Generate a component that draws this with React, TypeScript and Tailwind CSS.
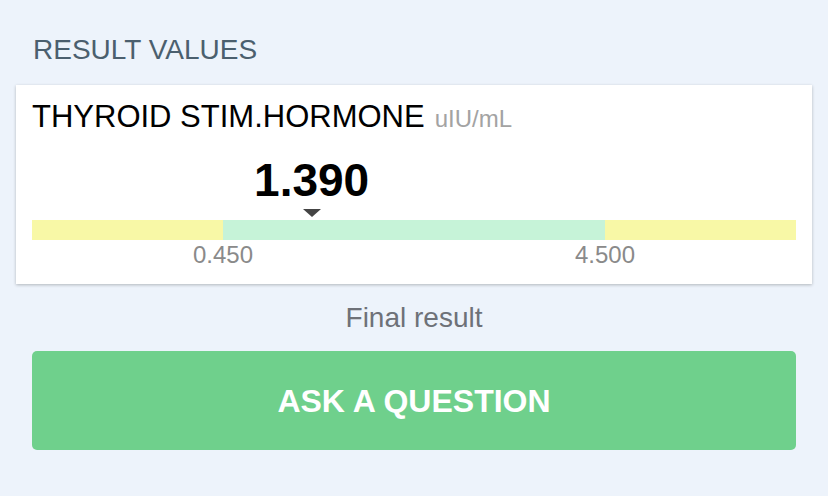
export default function App() {
  const low = 0.45
  const high = 4.5
  const value = 1.39
  // low/high sit at 25% / 75% of the bar
  const pos = 25 + ((value - low) / (high - low)) * 50

  return (
    <div className="w-[828px] h-[496px] bg-[#edf3fb] font-['Liberation_Sans',Arial,sans-serif] overflow-hidden">
      {/* HEADER */}
      <div className="pt-[35px] px-[33px] text-[28px] leading-[30px] text-[#4b5f6e]">
        RESULT VALUES
      </div>

      {/* CARD */}
      <div className="mx-4 mt-[20px] h-[199px] bg-white shadow-[0_1px_3px_rgba(0,0,0,0.25)] px-4 pt-[15px]">
        <div className="flex items-baseline gap-[10px]">
          <span className="text-[31px] leading-[34px] text-black">THYROID STIM.HORMONE</span>
          <span className="text-[24px] text-[#a3a3a3]">uIU/mL</span>
        </div>

        <div className="relative mt-[20px] h-[46px]">
          <div
            className="absolute top-0 -translate-x-1/2 text-[46px] leading-[46px] font-bold text-black"
            style={{ left: `${pos}%` }}
          >
            1.390
          </div>
        </div>
        <div className="relative h-[17px]">
          <div
            className="absolute top-[6px] -translate-x-1/2 w-0 h-0 border-l-[9px] border-r-[9px] border-t-[8px] border-l-transparent border-r-transparent border-t-[#444]"
            style={{ left: `${pos}%` }}
          />
        </div>

        <div className="flex h-[20px]">
          <div className="w-1/4 bg-[#f8f8a6]" />
          <div className="w-1/2 bg-[#c6f3d8]" />
          <div className="w-1/4 bg-[#f8f8a6]" />
        </div>
        <div className="flex text-[24px] leading-[30px] text-[#8a8a8a]">
          <div className="w-1/4" />
          <div className="w-1/2 flex justify-between">
            <span className="-translate-x-1/2">0.450</span>
            <span className="translate-x-1/2">4.500</span>
          </div>
          <div className="w-1/4" />
        </div>
      </div>

      {/* FOOTER */}
      <div className="mt-[18px] text-center text-[28px] leading-[32px] text-[#6e7178]">Final result</div>

      <button className="mx-8 mt-[17px] w-[764px] h-[99px] rounded-[5px] bg-[#6fd08c] text-white text-[32px] font-bold">
        ASK A QUESTION
      </button>
    </div>
  )
}
